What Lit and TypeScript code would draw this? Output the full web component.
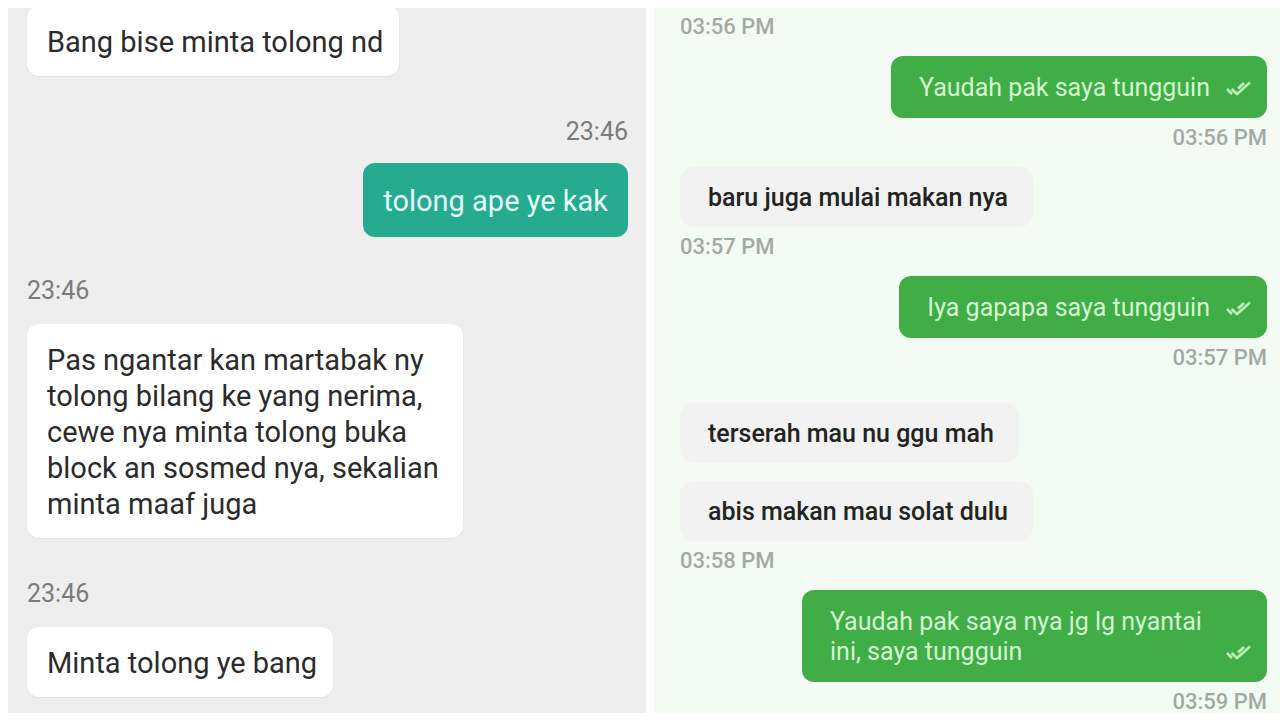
import { LitElement, html, css } from "lit";
import { customElement, property } from "lit/decorators.js";

interface Group {
  from: "them" | "me";
  time: string;
  texts: string[];
  spaced?: boolean;
}

const courierChat: Group[] = [
  { from: "them", time: "", texts: ["Bang bise minta tolong nd"] },
  { from: "me", time: "23:46", texts: ["tolong ape ye kak"] },
  {
    from: "them",
    time: "23:46",
    texts: [
      "Pas ngantar kan martabak ny tolong bilang ke yang nerima, cewe nya minta tolong buka block an sosmed nya, sekalian minta maaf juga",
    ],
  },
  { from: "them", time: "23:46", texts: ["Minta tolong ye bang"] },
];

const driverChat: Group[] = [
  { from: "them", time: "03:56 PM", texts: [] },
  { from: "me", time: "03:56 PM", texts: ["Yaudah pak saya tungguin"] },
  { from: "them", time: "03:57 PM", texts: ["baru juga mulai makan nya"] },
  { from: "me", time: "03:57 PM", texts: ["Iya gapapa saya tungguin"] },
  {
    from: "them",
    time: "03:58 PM",
    texts: ["terserah mau nu ggu mah", "abis makan mau solat dulu"],
    spaced: true,
  },
  {
    from: "me",
    time: "03:59 PM",
    texts: ["Yaudah pak saya nya jg lg nyantai ini, saya tungguin"],
  },
];

@customElement("courier-chat")
class CourierChat extends LitElement {
  @property({ attribute: false }) groups: Group[] = [];

  static styles = css`
    :host {
      display: flex;
      flex-direction: column;
      justify-content: flex-end;
      gap: 39px;
      min-width: 0;
      box-sizing: border-box;
      padding: 0 18px 16px 19px;
      overflow: hidden;
      background: #eeeeee;
    }
    .group {
      display: flex;
      flex-direction: column;
      flex-shrink: 0;
      align-items: flex-start;
      gap: 18px;
    }
    .them:not(:last-child) {
      margin-bottom: 2px;
    }
    .me {
      align-items: flex-end;
      gap: 16px;
    }
    .time {
      font-size: 25px;
      line-height: 30px;
      color: #7b7b7b;
    }
    .bubble {
      box-sizing: border-box;
      max-width: 436px;
      margin: 0;
      padding: 18px 16px 16px 20px;
      border-radius: 12px;
      background: #ffffff;
      box-shadow: 0 1px 2px rgba(0, 0, 0, 0.06);
      font-size: 29px;
      line-height: 36px;
      color: #2b2b2b;
    }
    .me .bubble {
      padding: 20px 20px 18px 20px;
      background: #26ab91;
      color: #e4fff8;
      box-shadow: none;
    }
  `;

  render() {
    return this.groups.map(
      (g) => html`
        <div class="group ${g.from}">
          ${g.time ? html`<time class="time">${g.time}</time>` : null}
          ${g.texts.map((t) => html`<p class="bubble">${t}</p>`)}
        </div>
      `
    );
  }
}

@customElement("driver-chat")
class DriverChat extends LitElement {
  @property({ attribute: false }) groups: Group[] = [];

  static styles = css`
    :host {
      display: flex;
      flex-direction: column;
      justify-content: flex-end;
      gap: 18px;
      min-width: 0;
      box-sizing: border-box;
      padding: 0 13px 0 26px;
      overflow: hidden;
      background: #f4fbf4;
    }
    .group {
      display: flex;
      flex-direction: column;
      flex-shrink: 0;
      align-items: flex-start;
      gap: 9px;
    }
    .me {
      align-items: flex-end;
    }
    .spaced {
      margin-top: 16px;
    }
    .bubbles {
      display: flex;
      flex-direction: column;
      align-items: inherit;
      gap: 18px;
    }
    .time {
      font-size: 22px;
      font-weight: 500;
      line-height: 22px;
      color: #a3aaa3;
    }
    .bubble {
      display: flex;
      align-items: flex-end;
      gap: 16px;
      box-sizing: border-box;
      max-width: 465px;
      padding: 16px 25px 14px 28px;
      border-radius: 14px;
      background: #f1f2f1;
      font-size: 25px;
      line-height: 30px;
      font-weight: 500;
      color: #222422;
    }
    .me .bubble {
      padding: 17px 16px 15px 28px;
      border-radius: 12px;
      background: #41ad47;
      color: #d3f8d0;
      font-weight: 400;
    }
    .text {
      margin: 0;
    }
    .ticks {
      flex: none;
      width: 25px;
      height: 15px;
      margin-bottom: 7px;
      fill: none;
      stroke: #bdf0b9;
      stroke-width: 2.6;
    }
  `;

  render() {
    return this.groups.map(
      (g) => html`
        <div class="group ${g.from} ${g.spaced ? "spaced" : ""}">
          ${g.texts.length
            ? html`<div class="bubbles">
                ${g.texts.map(
                  (t) => html`<div class="bubble">
                    <p class="text">${t}</p>
                    ${g.from === "me"
                      ? html`<svg class="ticks" viewBox="0 0 25 15" role="img" aria-label="Read">
                          <path d="M1 8 L6 13 M5.5 8 L11 13 L24 1.5 M12 7.5 L18 2" />
                        </svg>`
                      : null}
                  </div>`
                )}
              </div>`
            : null}
          <time class="time">${g.time}</time>
        </div>
      `
    );
  }
}

@customElement("app-root")
class AppRoot extends LitElement {
  static styles = css`
    :host {
      display: grid;
      grid-template-columns: 638fr 626fr;
      grid-template-rows: minmax(0, 1fr);
      gap: 8px;
      box-sizing: border-box;
      height: 100vh;
      padding: 8px 0 7px 8px;
      background: #ffffff;
      font-family: Roboto, "Liberation Sans", sans-serif;
    }
  `;

  render() {
    return html`
      <courier-chat .groups=${courierChat}></courier-chat>
      <driver-chat .groups=${driverChat}></driver-chat>
    `;
  }
}
